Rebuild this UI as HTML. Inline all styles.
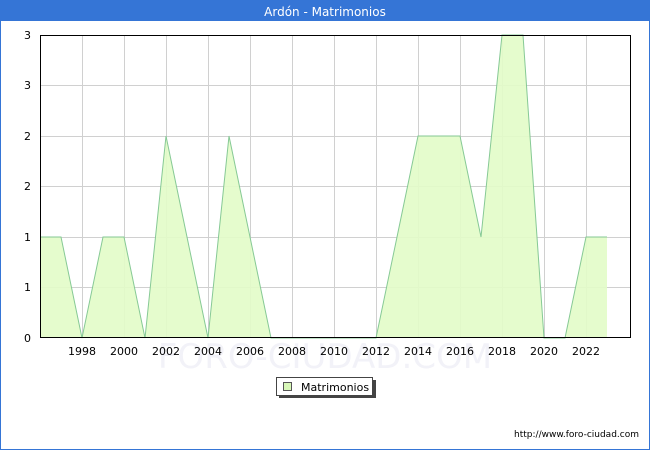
<!DOCTYPE html>
<html><head><meta charset="utf-8"><style>
body{margin:0;width:650px;height:450px;overflow:hidden;background:#fff;font-family:"DejaVu Sans","Liberation Sans",sans-serif}
</style></head><body>
<svg width="650" height="450" xmlns="http://www.w3.org/2000/svg" font-family="DejaVu Sans, Liberation Sans, sans-serif">
<rect x="0.5" y="0.5" width="649" height="449" fill="#fff" stroke="#3575d6"/>
<rect x="0" y="0" width="650" height="21" fill="#3575d6"/>
<text x="325" y="16" font-size="12" fill="#fff" text-anchor="middle">Ardón - Matrimonios</text>
<g stroke="#d0d0d0" stroke-width="1">
<line x1="40" y1="85.5" x2="631" y2="85.5"/><line x1="40" y1="136.5" x2="631" y2="136.5"/><line x1="40" y1="186.5" x2="631" y2="186.5"/><line x1="40" y1="237.5" x2="631" y2="237.5"/><line x1="40" y1="287.5" x2="631" y2="287.5"/>
<line x1="82.5" y1="35" x2="82.5" y2="338"/><line x1="124.5" y1="35" x2="124.5" y2="338"/><line x1="166.5" y1="35" x2="166.5" y2="338"/><line x1="208.5" y1="35" x2="208.5" y2="338"/><line x1="250.5" y1="35" x2="250.5" y2="338"/><line x1="292.5" y1="35" x2="292.5" y2="338"/><line x1="334.5" y1="35" x2="334.5" y2="338"/><line x1="376.5" y1="35" x2="376.5" y2="338"/><line x1="418.5" y1="35" x2="418.5" y2="338"/><line x1="460.5" y1="35" x2="460.5" y2="338"/><line x1="502.5" y1="35" x2="502.5" y2="338"/><line x1="544.5" y1="35" x2="544.5" y2="338"/><line x1="586.5" y1="35" x2="586.5" y2="338"/>
</g>
<polygon fill="#e2fcc8" fill-opacity="0.9" points="40,338 40,237 61,237 82,338 103,237 124,237 145,338 166,136 187,237 208,338 229,136 250,237 271,338 376,338 397,237 418,136 439,136 460,136 481,237 502,35 523,35 544,338 565,338 586,237 607,237 607,338"/>
<polyline fill="none" stroke="#86c995" stroke-width="1" points="40,237 61,237 82,338 103,237 124,237 145,338 166,136 187,237 208,338 229,136 250,237 271,338 376,338 397,237 418,136 439,136 460,136 481,237 502,35 523,35 544,338 565,338 586,237 607,237"/>
<text x="325" y="368" font-size="34" fill="#f2f2f8" text-anchor="middle">FORO-CIUDAD.COM</text>
<rect x="40.5" y="35.5" width="590" height="302" fill="none" stroke="#000"/>
<g font-size="11" fill="#000" text-anchor="end">
<text x="31" y="39">3</text><text x="31" y="89">3</text><text x="31" y="140">2</text><text x="31" y="190">2</text><text x="31" y="241">1</text><text x="31" y="291">1</text><text x="31" y="342">0</text>
</g>
<g font-size="11" fill="#000" text-anchor="middle">
<text x="82" y="355">1998</text><text x="124" y="355">2000</text><text x="166" y="355">2002</text><text x="208" y="355">2004</text><text x="250" y="355">2006</text><text x="292" y="355">2008</text><text x="334" y="355">2010</text><text x="376" y="355">2012</text><text x="418" y="355">2014</text><text x="460" y="355">2016</text><text x="502" y="355">2018</text><text x="544" y="355">2020</text><text x="586" y="355">2022</text>
</g>
<rect x="279" y="380" width="97" height="18" fill="#444"/>
<rect x="276.5" y="377.5" width="96" height="18" fill="#fff" stroke="#444"/>
<rect x="283.5" y="382.5" width="8" height="8" fill="#d8f8b8" stroke="#555"/>
<text x="301" y="391" font-size="11" fill="#000">Matrimonios</text>
<text x="639" y="437" font-size="9" fill="#000" text-anchor="end">http://www.foro-ciudad.com</text>
</svg>
</body></html>
